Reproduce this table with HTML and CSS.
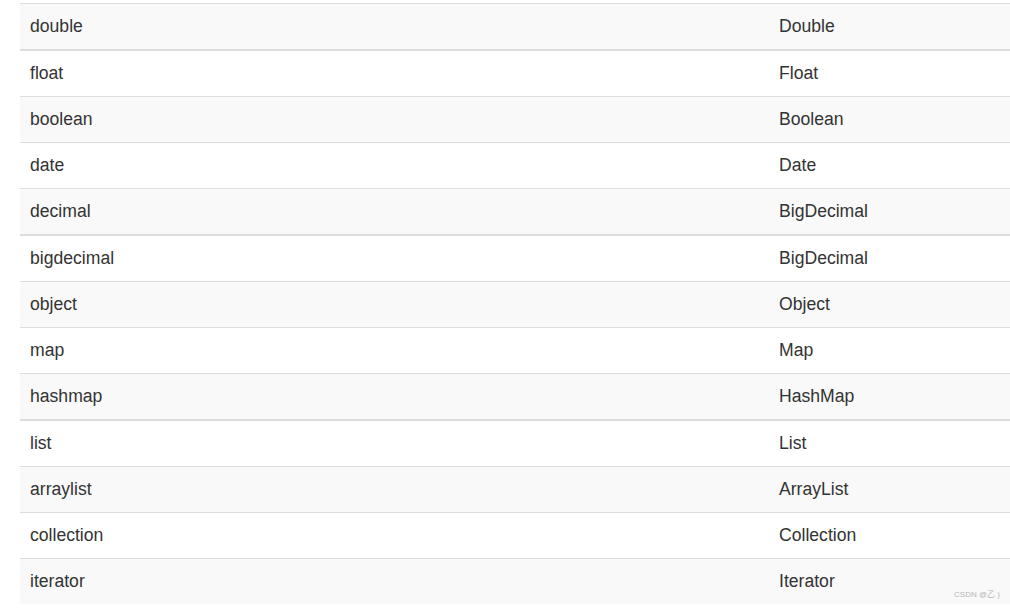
FILE: index.html
```html
<!DOCTYPE html>
<html>
<head>
<meta charset="utf-8">
<link rel="stylesheet" href="styles.css">
</head>
<body>
<table class="types">
  <colgroup><col class="col-a"><col class="col-b"></colgroup>
  <tbody>
    <tr class="odd"><td>double</td><td>Double</td></tr>
    <tr class="thick"><td>float</td><td>Float</td></tr>
    <tr class="odd"><td>boolean</td><td>Boolean</td></tr>
    <tr><td>date</td><td>Date</td></tr>
    <tr class="odd"><td>decimal</td><td>BigDecimal</td></tr>
    <tr class="thick"><td>bigdecimal</td><td>BigDecimal</td></tr>
    <tr class="odd"><td>object</td><td>Object</td></tr>
    <tr><td>map</td><td>Map</td></tr>
    <tr class="odd"><td>hashmap</td><td>HashMap</td></tr>
    <tr class="thick"><td>list</td><td>List</td></tr>
    <tr class="odd"><td>arraylist</td><td>ArrayList</td></tr>
    <tr><td>collection</td><td>Collection</td></tr>
    <tr class="odd"><td>iterator</td><td>Iterator<span class="mark">CSDN @乙 )</span></td></tr>
  </tbody>
</table>
</body>
</html>
```
FILE: styles.css
```css
html, body {
  margin: 0;
  padding: 0;
  background: #fff;
}
body {
  padding: 3px 0 0 20px;
  font-family: "Liberation Sans", Arial, sans-serif;
  font-size: 17.6px;
  color: #333;
}
.types {
  width: 990px;
  border-collapse: separate;
  border-spacing: 0;
  table-layout: fixed;
}
.col-a { width: 749px; }
.col-b { width: 241px; }
.types td {
  border-top: 1px solid #ddd;
  padding: 0 10px;
  height: 45px;
  line-height: 45px;
  vertical-align: middle;
  white-space: nowrap;
  position: relative;
}
.types tr.thick td {
  border-top: 2px solid #ddd;
}
.types tr.odd td {
  background: #f9f9f9;
}
.mark {
  position: absolute;
  right: 10px;
  bottom: 4px;
  font-size: 8px;
  line-height: 10px;
  color: #b5b5b5;
  font-family: "Liberation Sans", "Noto Sans CJK SC", sans-serif;
}
```
